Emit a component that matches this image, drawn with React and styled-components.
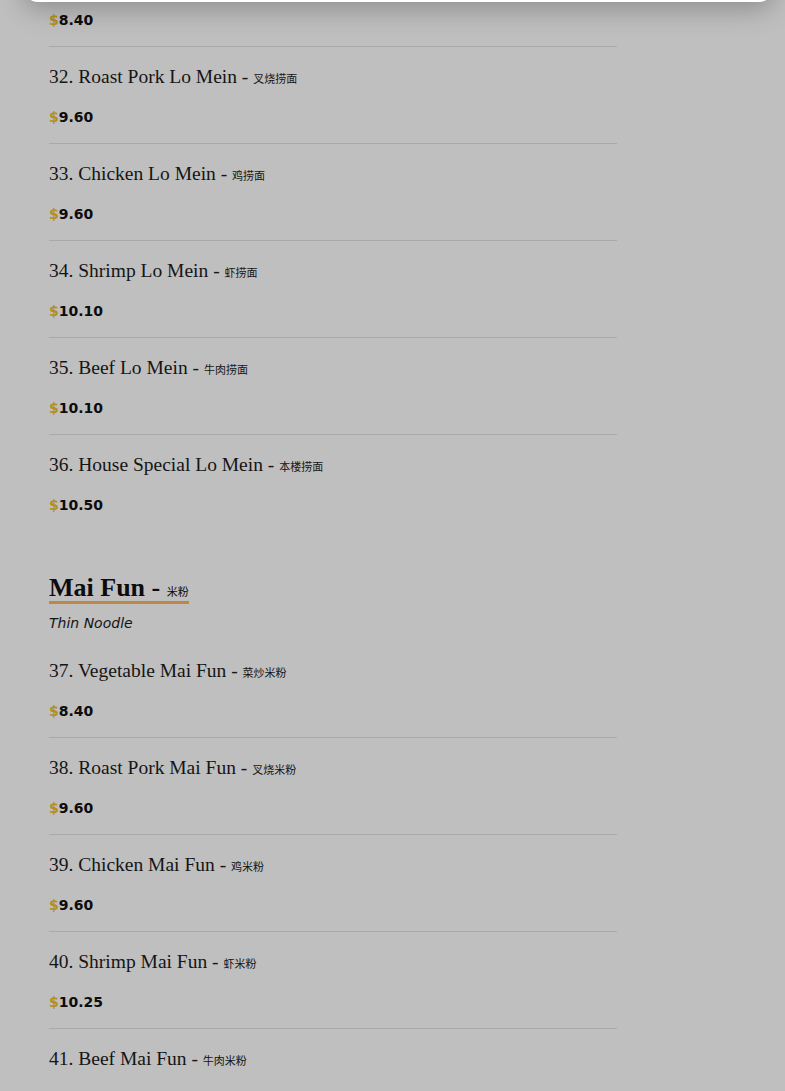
import React from 'react'
import styled, { createGlobalStyle } from 'styled-components'

const GlobalStyle = createGlobalStyle`
    html, body {
        margin: 0;
        padding: 0;
        background: #ffffff;
    }
    body {
        font-family: "DejaVu Sans", sans-serif;
        color: #1a1a1a;
        overflow: hidden;
    }
`

const Page = styled.div`
    padding: 0 0 0 49px;
    width: 568px;
`

const Section = styled.section`
    display: flex;
    flex-direction: column;
    margin-top: ${(p) => (p.first ? '0' : '44px')};
`

const Heading = styled.h2`
    align-self: flex-start;
    margin: 0;
    font-family: "Liberation Serif", serif;
    font-weight: 700;
    font-size: 26px;
    line-height: 26px;
    color: #111;
    border-bottom: 3px solid #ffb45e;
`

const Subtitle = styled.p`
    margin: 9px 0 8px;
    font-family: "DejaVu Sans", sans-serif;
    font-style: italic;
    font-size: 14px;
    line-height: 20px;
    color: #1a1a1a;
`

const Item = styled.div`
    display: flex;
    flex-direction: column;
    gap: 16px;
    padding: ${(p) => (p.partial ? '10px' : '16px')} 0 16px;
    border-bottom: ${(p) => (p.last ? 'none' : '1px solid #e2e2e2')};
`

const Title = styled.div`
    height: 28px;
    font-family: "Liberation Serif", serif;
    font-size: 19.5px;
    line-height: 28px;
    color: #1c1c1c;
    white-space: nowrap;
`

const Chinese = styled.span`
    font-family: "Noto Sans CJK SC", sans-serif;
    font-weight: 400;
    font-size: ${(p) => p.size || 11}px;
    line-height: 1;
`

const Price = styled.div`
    font-family: "DejaVu Sans", sans-serif;
    font-weight: 700;
    font-size: 14px;
    line-height: 20px;
    color: #111;
`

const Dollar = styled.span`
    color: #f0c020;
`

const Overlay = styled.div`
    position: fixed;
    inset: 0;
    background: rgba(0, 0, 0, 0.25);
`

const Modal = styled.div`
    position: fixed;
    top: -398px;
    left: 24px;
    width: 749px;
    height: 400px;
    background: #fff;
    border-radius: 14px;
    box-shadow: 0 6px 28px rgba(0, 0, 0, 0.28);
`

const loMein = [
    { no: 32, name: 'Roast Pork Lo Mein', zh: '叉烧捞面', price: '9.60' },
    { no: 33, name: 'Chicken Lo Mein', zh: '鸡捞面', price: '9.60' },
    { no: 34, name: 'Shrimp Lo Mein', zh: '虾捞面', price: '10.10' },
    { no: 35, name: 'Beef Lo Mein', zh: '牛肉捞面', price: '10.10' },
    { no: 36, name: 'House Special Lo Mein', zh: '本楼捞面', price: '10.50' }
]

const maiFun = [
    { no: 37, name: 'Vegetable Mai Fun', zh: '菜炒米粉', price: '8.40' },
    { no: 38, name: 'Roast Pork Mai Fun', zh: '叉烧米粉', price: '9.60' },
    { no: 39, name: 'Chicken Mai Fun', zh: '鸡米粉', price: '9.60' },
    { no: 40, name: 'Shrimp Mai Fun', zh: '虾米粉', price: '10.25' },
    { no: 41, name: 'Beef Mai Fun', zh: '牛肉米粉', price: '10.25' }
]

const PriceTag = ({ value }) => (
    <Price>
        <Dollar>$</Dollar>
        {value}
    </Price>
)

const MenuItem = ({ item, last }) => (
    <Item last={last}>
        <Title>
            {item.no}. {item.name} - <Chinese>{item.zh}</Chinese>
        </Title>
        <PriceTag value={item.price} />
    </Item>
)

const App = () => {
    return (
        <>
            <GlobalStyle />
            <Page>
                <Section first>
                    <Item partial>
                        <PriceTag value="8.40" />
                    </Item>
                    {loMein.map((item, i) => (
                        <MenuItem key={item.no} item={item} last={i === loMein.length - 1} />
                    ))}
                </Section>
                <Section>
                    <Heading>
                        Mai Fun - <Chinese size={11}>米粉</Chinese>
                    </Heading>
                    <Subtitle>Thin Noodle</Subtitle>
                    {maiFun.map((item, i) => (
                        <MenuItem key={item.no} item={item} last={i === maiFun.length - 1} />
                    ))}
                </Section>
            </Page>
            <Overlay />
            <Modal />
        </>
    )
}

export default App
